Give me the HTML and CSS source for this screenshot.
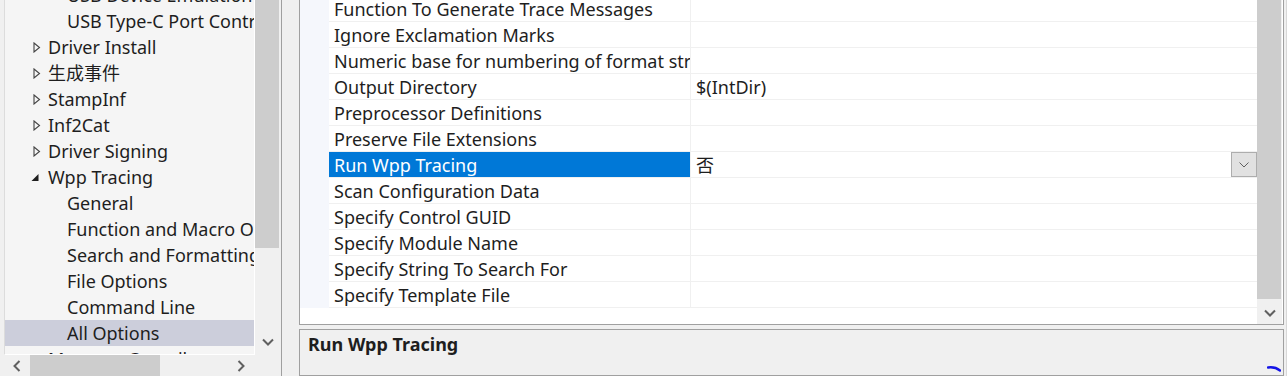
FILE: index.html
```html
<!DOCTYPE html>
<html lang="en">

<head>
    <meta charset="UTF-8">
    <title>Property Pages</title>
    <link rel="stylesheet" href="styles.css">
</head>

<body>
    <div class="window">
        <div class="nav">
            <div class="nav-main">
                <div class="tree">
                    <div class="tree-rows">
                        <div class="node lvl3">USB Device Emulation</div>
                        <div class="node lvl3">USB Type-C Port Controller</div>
                        <div class="node lvl2"><svg class="exp" width="8" height="11" viewBox="0 0 8 11"><path d="M1 1 L6.5 5.5 L1 10 Z" fill="none" stroke="#444" stroke-width="1.1"/></svg>Driver Install</div>
                        <div class="node lvl2"><svg class="exp" width="8" height="11" viewBox="0 0 8 11"><path d="M1 1 L6.5 5.5 L1 10 Z" fill="none" stroke="#444" stroke-width="1.1"/></svg>生成事件</div>
                        <div class="node lvl2"><svg class="exp" width="8" height="11" viewBox="0 0 8 11"><path d="M1 1 L6.5 5.5 L1 10 Z" fill="none" stroke="#444" stroke-width="1.1"/></svg>StampInf</div>
                        <div class="node lvl2"><svg class="exp" width="8" height="11" viewBox="0 0 8 11"><path d="M1 1 L6.5 5.5 L1 10 Z" fill="none" stroke="#444" stroke-width="1.1"/></svg>Inf2Cat</div>
                        <div class="node lvl2"><svg class="exp" width="8" height="11" viewBox="0 0 8 11"><path d="M1 1 L6.5 5.5 L1 10 Z" fill="none" stroke="#444" stroke-width="1.1"/></svg>Driver Signing</div>
                        <div class="node lvl2"><svg class="exp open" width="8" height="11" viewBox="0 0 8 11"><path d="M7.5 2 L7.5 9 L0.5 9 Z" fill="#1e1e1e"/></svg>Wpp Tracing</div>
                        <div class="node lvl3">General</div>
                        <div class="node lvl3">Function and Macro Options</div>
                        <div class="node lvl3">Search and Formatting</div>
                        <div class="node lvl3">File Options</div>
                        <div class="node lvl3">Command Line</div>
                        <div class="node lvl3 selected">All Options</div>
                        <div class="node lvl2"><svg class="exp" width="8" height="11" viewBox="0 0 8 11"><path d="M1 1 L6.5 5.5 L1 10 Z" fill="none" stroke="#444" stroke-width="1.1"/></svg>Message Compiler</div>
                    </div>
                </div>
                <div class="vscroll">
                    <div class="thumb"></div>
                    <div class="track"></div>
                    <svg class="arrow" width="12" height="8" viewBox="0 0 12 8"><path d="M1 1.5 L6 6.5 L11 1.5" fill="none" stroke="#606060" stroke-width="2"/></svg>
                </div>
            </div>
            <div class="nav-bottom">
                <div class="hscroll">
                    <svg class="harrow" width="8" height="12" viewBox="0 0 8 12"><path d="M6.5 1 L1.5 6 L6.5 11" fill="none" stroke="#606060" stroke-width="2"/></svg>
                    <div class="hthumb"></div>
                    <div class="htrack"></div>
                    <svg class="harrow" width="8" height="12" viewBox="0 0 8 12"><path d="M1.5 1 L6.5 6 L1.5 11" fill="none" stroke="#606060" stroke-width="2"/></svg>
                </div>
                <div class="corner"></div>
            </div>
        </div>

        <div class="content">
            <div class="grid">
                <div class="margin-col"></div>
                <div class="props">
                    <div class="row"><div class="name">Function To Generate Trace Messages</div><div class="value"></div></div>
                    <div class="row"><div class="name">Ignore Exclamation Marks</div><div class="value"></div></div>
                    <div class="row"><div class="name">Numeric base for numbering of format strings</div><div class="value"></div></div>
                    <div class="row"><div class="name">Output Directory</div><div class="value">$(IntDir)</div></div>
                    <div class="row"><div class="name">Preprocessor Definitions</div><div class="value"></div></div>
                    <div class="row"><div class="name">Preserve File Extensions</div><div class="value"></div></div>
                    <div class="row active">
                        <div class="name">Run Wpp Tracing</div>
                        <div class="value">否
                            <div class="combo">
                                <svg width="10" height="6" viewBox="0 0 10 6"><path d="M0.5 0.5 L5 5 L9.5 0.5" fill="none" stroke="#606060" stroke-width="1"/></svg>
                            </div>
                        </div>
                    </div>
                    <div class="row"><div class="name">Scan Configuration Data</div><div class="value"></div></div>
                    <div class="row"><div class="name">Specify Control GUID</div><div class="value"></div></div>
                    <div class="row"><div class="name">Specify Module Name</div><div class="value"></div></div>
                    <div class="row"><div class="name">Specify String To Search For</div><div class="value"></div></div>
                    <div class="row"><div class="name">Specify Template File</div><div class="value"></div></div>
                </div>
                <div class="vscroll grid-scroll">
                    <div class="thumb"></div>
                    <div class="track"></div>
                    <svg class="arrow" width="12" height="8" viewBox="0 0 12 8"><path d="M1 1.5 L6 6.5 L11 1.5" fill="none" stroke="#606060" stroke-width="2"/></svg>
                </div>
            </div>
            <div class="desc">
                <div class="desc-title">Run Wpp Tracing</div>
                <svg class="mark" width="14" height="6" viewBox="0 0 14 6"><path d="M1 1.5 Q8 0.5 13 4.5" fill="none" stroke="#1414e6" stroke-width="2.4" stroke-linecap="round"/></svg>
            </div>
        </div>
        <div class="edge"></div>
    </div>
</body>

</html>
```

FILE: styles.css
```css
* {
    margin: 0;
    padding: 0;
    box-sizing: border-box;
}

body {
    background: #f0f0f0;
    font-family: "Noto Sans", "Noto Sans CJK SC", sans-serif;
    font-size: 18px;
    color: #1e1e1e;
    overflow: hidden;
}

.window {
    display: flex;
    width: 1287px;
    height: 376px;
    overflow: hidden;
}

/* left tree pane */
.nav {
    width: 282px;
    padding-left: 4px;
    border-right: 1px solid #a0a0a0;
    display: flex;
    flex-direction: column;
    flex-shrink: 0;
}

.nav-main {
    display: flex;
    height: 355px;
}

.tree {
    width: 251px;
    background: #f5f5f5;
    border-left: 1px solid #dcdcdc;
    border-right: 1px solid #ffffff;
    border-bottom: 1px solid #ffffff;
    overflow: hidden;
}

.tree-rows {
    margin-top: -18px;
}

.node {
    height: 26px;
    line-height: 26px;
    white-space: nowrap;
    display: flex;
    align-items: center;
}

.node.lvl2 {
    padding-left: 28px;
}

.node.lvl3 {
    padding-left: 62px;
}

.node.selected {
    background: #cccedb;
}

.exp {
    width: 8px;
    margin-right: 7px;
}

.exp.open {
    margin-left: -2px;
    margin-right: 9px;
}

.vscroll {
    width: 25px;
    display: flex;
    flex-direction: column;
    align-items: center;
    background: #f0f0f0;
}

.vscroll .thumb {
    width: 24px;
    height: 248px;
    background: #cdcdcd;
    align-self: flex-start;
}

.vscroll .track {
    flex: 1;
}

.vscroll .arrow {
    margin-bottom: 9px;
}

.nav-bottom {
    display: flex;
    height: 21px;
}

.hscroll {
    width: 251px;
    display: flex;
    align-items: center;
    padding-left: 9px;
    padding-right: 10px;
}

.hthumb {
    width: 130px;
    height: 100%;
    background: #cdcdcd;
    margin-left: 9px;
}

.htrack {
    flex: 1;
}

.corner {
    width: 25px;
}

/* right side */
.content {
    width: 985px;
    margin-left: 17px;
    display: flex;
    flex-direction: column;
    gap: 4px;
    flex-shrink: 0;
}

.grid {
    height: 325px;
    display: flex;
    border: 1px solid #a0a0a0;
    border-top: none;
    background: #ffffff;
}

.margin-col {
    width: 29px;
    height: 308px;
    background: #f5f7fc;
}

.props {
    width: 928px;
    margin-top: -4px;
}

.row {
    display: flex;
    height: 26px;
    border-bottom: 1px solid #f0f0f0;
}

.row .name {
    width: 362px;
    padding-left: 5px;
    padding-top: 1px;
    line-height: 24px;
    white-space: nowrap;
    overflow: hidden;
    border-right: 1px solid #f0f0f0;
}

.row .value {
    flex: 1;
    padding-left: 5px;
    padding-top: 1px;
    line-height: 24px;
    display: flex;
    align-items: center;
    position: relative;
}

.row.active .name {
    background: #0078d7;
    color: #ffffff;
}

.combo {
    position: absolute;
    right: 0;
    top: 0;
    width: 26px;
    height: 25px;
    background: #e1e1e1;
    border: 1px solid #adadad;
    display: flex;
    align-items: center;
    justify-content: center;
}

.grid-scroll {
    height: 324px;
}

.grid-scroll .thumb {
    height: 299px;
}

.grid-scroll .arrow {
    margin-bottom: 7px;
}

.desc {
    flex: 1;
    border: 1px solid #a0a0a0;
    background: #f0f0f0;
    padding: 3px 8px;
    position: relative;
}

.desc-title {
    font-weight: bold;
    line-height: 22px;
}

.mark {
    position: absolute;
    right: 2px;
    bottom: 3px;
}

.edge {
    width: 3px;
    border-right: 1px solid #d8d8d8;
}
```
